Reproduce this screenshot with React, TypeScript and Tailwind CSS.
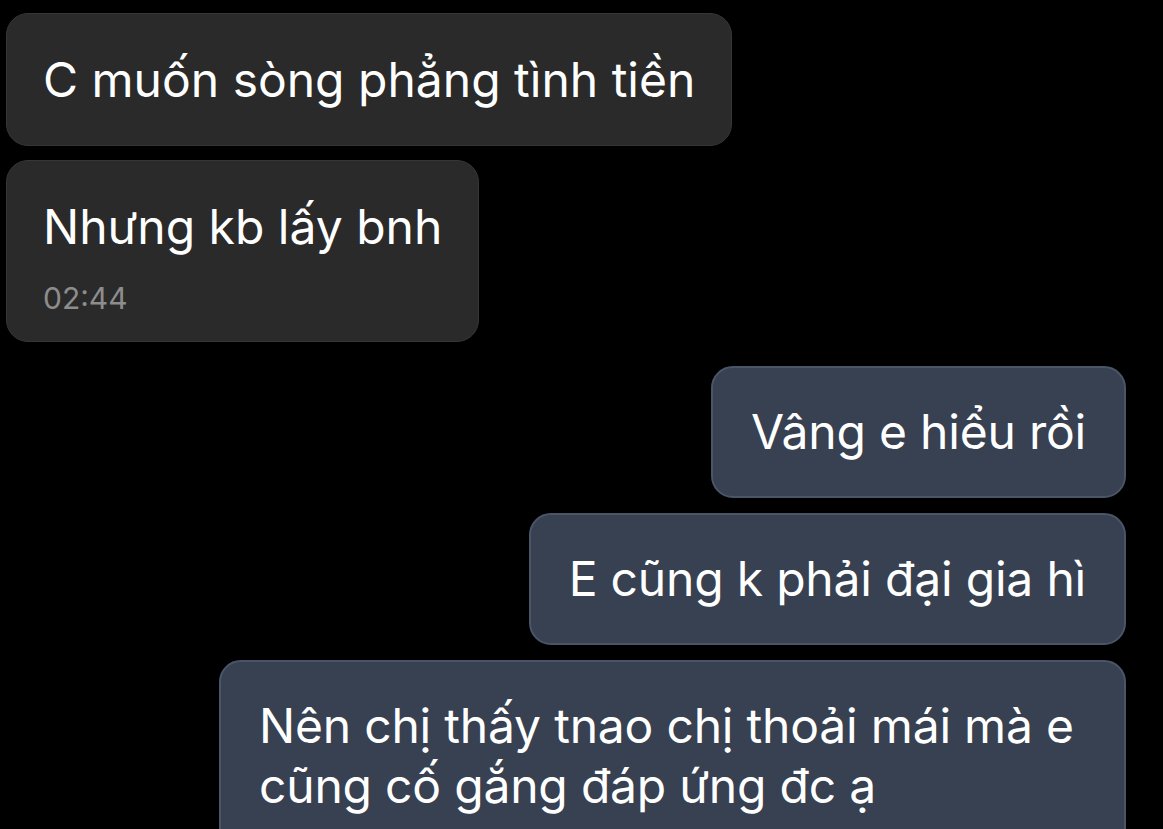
import React from 'react';

const Incoming = ({ text, time }: { text: string; time?: string }) => (
  <div className="flex justify-start">
    <div
      className={`rounded-[22px] border border-[#363636] bg-[#2a2a2a] px-[36px] pt-[36px] text-[48px] leading-[60px] text-white ${time ? 'pb-[24px]' : 'pb-[35px]'}`}
    >
      <p>{text}</p>
      {time && <p className="mt-[22px] text-[30px] leading-[38px] text-[#8d8d8d]">{time}</p>}
    </div>
  </div>
);

const Outgoing = ({ children, w }: { children: React.ReactNode; w?: string }) => (
  <div className="flex justify-end">
    <div
      className={`whitespace-nowrap rounded-[22px] border-2 border-[#4a5668] bg-[#374151] px-[38px] pb-[34px] pt-[34px] text-[48px] leading-[60px] tracking-[-0.2px] text-white ${w ?? ''}`}
    >
      <p>{children}</p>
    </div>
  </div>
);

export default function App() {
  return (
    <div
      className="h-[829px] w-full overflow-hidden bg-black pl-[6px] pr-[37px] pt-[13px]"
      style={{ fontFamily: 'Inter, "Noto Sans", sans-serif' }}
    >
      <div className="flex flex-col gap-[14px]">
        <Incoming text="C muốn sòng phẳng tình tiền" />
        <Incoming text="Nhưng kb lấy bnh" time="02:44" />
      </div>
      <div className="mt-[24px] flex flex-col gap-[15px]">
        <Outgoing>Vâng e hiểu rồi</Outgoing>
        <Outgoing>E cũng k phải đại gia hì</Outgoing>
        <Outgoing w="w-[907px]">
          Nên chị thấy tnao chị thoải mái mà e
          <br />
          cũng cố gắng đáp ứng đc ạ
        </Outgoing>
      </div>
    </div>
  );
}
